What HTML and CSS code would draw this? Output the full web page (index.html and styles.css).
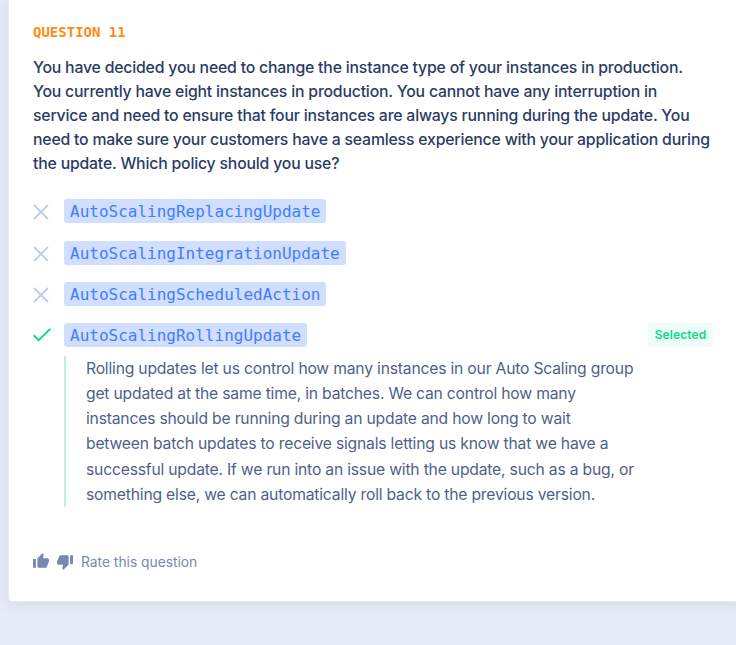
FILE: index.html
```html
<!DOCTYPE html>
<html lang="en">
<head>
<meta charset="utf-8">
<title>Question 11</title>
<link rel="stylesheet" href="styles.css">
</head>
<body>
<main class="card">
  <h2 class="eyebrow">QUESTION 11</h2>
  <p class="question">You have decided you need to change the instance type of your instances in production.<br>You currently have eight instances in production. You cannot have any interruption in<br>service and need to ensure that four instances are always running during the update. You<br>need to make sure your customers have a seamless experience with your application during<br>the update. Which policy should you use?</p>
  <ul class="answers">
    <li class="answer first"><svg class="cross" viewBox="0 0 18 18"><path d="M2 2l14 14M16 2L2 16"/></svg><code>AutoScalingReplacingUpdate</code></li>
    <li class="answer"><svg class="cross" viewBox="0 0 18 18"><path d="M2 2l14 14M16 2L2 16"/></svg><code>AutoScalingIntegrationUpdate</code></li>
    <li class="answer"><svg class="cross" viewBox="0 0 18 18"><path d="M2 2l14 14M16 2L2 16"/></svg><code>AutoScalingScheduledAction</code></li>
    <li class="answer"><svg class="check" viewBox="0 0 18 18"><path d="M.7 9.2l5 5L17.3 2.9"/></svg><code>AutoScalingRollingUpdate</code><span class="badge">Selected</span></li>
  </ul>
  <p class="explanation">Rolling updates let us control how many instances in our Auto Scaling group<br>get updated at the same time, in batches. We can control how many<br>instances should be running during an update and how long to wait<br>between batch updates to receive signals letting us know that we have a<br>successful update. If we run into an issue with the update, such as a bug, or<br>something else, we can automatically roll back to the previous version.</p>
  <footer class="rate">
    <svg class="thumb" viewBox="1 1 22 20"><path d="M1 21h4V9H1v12zm22-11c0-1.100-.900-2-2-2h-6.310l.950-4.570.030-.320c0-.410-.170-.790-.440-1.060L14.170 1 7.590 7.590C7.220 7.950 7 8.450 7 9v10c0 1.100.900 2 2 2h9c.830 0 1.540-.500 1.840-1.220l3.020-7.050c.090-.230.140-.470.140-.730v-2z"/></svg>
    <svg class="thumb down" viewBox="1 3 22 20"><path d="M15 3H6c-.830 0-1.540.500-1.840 1.220l-3.020 7.050c-.090.230-.140.470-.140.730v2c0 1.100.900 2 2 2h6.310l-.950 4.570-.030.320c0 .410.170.790.440 1.060L9.830 23l6.590-6.590c.360-.360.580-.860.580-1.410V5c0-1.100-.900-2-2-2zm4 0v12h4V3h-4z"/></svg>
    <span class="rate-label">Rate this question</span>
  </footer>
</main>
</body>
</html>
```
FILE: styles.css
```css
* { box-sizing: border-box; }
body {
  margin: 0;
  height: 645px;
  overflow: hidden;
  background: #e7ebf7;
  font-family: Inter, "Liberation Sans", sans-serif;
}
.card {
  height: 602px;
  margin-left: 8px;
  margin-right: -8px;
  padding: 22px 32px 0 24px;
  background: #fff;
  border: 1px solid #e6eaf3;
  border-width: 0 0 1px 1px;
  border-radius: 0 0 0 5px;
  box-shadow: 0 2px 14px rgba(60, 85, 130, .13);
}
.eyebrow {
  margin: 0;
  font: bold 14px/20px "DejaVu Sans Mono", monospace;
  color: #ff8a14;
}
.question {
  margin: 14px 0 0;
  font-size: 15.8px;
  line-height: 24px;
  font-weight: 500;
  letter-spacing: -.19px;
  white-space: nowrap;
  color: #2b3c63;
}
.answers {
  margin: 23px 0 0;
  padding: 0;
  list-style: none;
}
.answer {
  display: flex;
  align-items: center;
  height: 24px;
  margin-top: 17px;
}
.answer.first { margin: 0 0 18px; }
.answer.first + .answer { margin-top: 0; }
.answer svg {
  width: 18px;
  height: 18px;
  margin: 2px 13px 0 -1px;
  fill: none;
  stroke: #c1cde6;
  stroke-width: 1.8;
}
.answer .check { stroke: #0cda87; stroke-width: 2; margin: 0 13px 0 0; }
.answer .cross { margin-right: 14px; }
code {
  height: 24px;
  padding: 0 6px;
  border-radius: 3px;
  background: #d0deff;
  color: #437cff;
  font: 16px/25px "DejaVu Sans Mono", monospace;
}
.badge {
  width: 65px;
  height: 24px;
  margin-left: auto;
  margin-right: -1px;
  border-radius: 3px;
  background: #effdf8;
  color: #0cda87;
  font-size: 12px;
  line-height: 24px;
  font-weight: 600;
  letter-spacing: .1px;
  text-align: center;
}
.explanation {
  margin: 9px 0 0 31px;
  padding-left: 20px;
  border-left: 2px solid #b9f4dc;
  font-size: 15.7px;
  line-height: 25.15px;
  letter-spacing: -.2px;
  white-space: nowrap;
  color: #505f8a;
}
.rate {
  display: flex;
  align-items: center;
  height: 20px;
  margin-top: 45px;
  color: #7689b1;
}
.thumb {
  width: 16px;
  height: 15px;
  margin: -3px 8px 0 0;
  fill: currentColor;
}
.thumb.down { margin-top: 2px; }
.rate-label { font-size: 13.8px; line-height: 20px; }
```
